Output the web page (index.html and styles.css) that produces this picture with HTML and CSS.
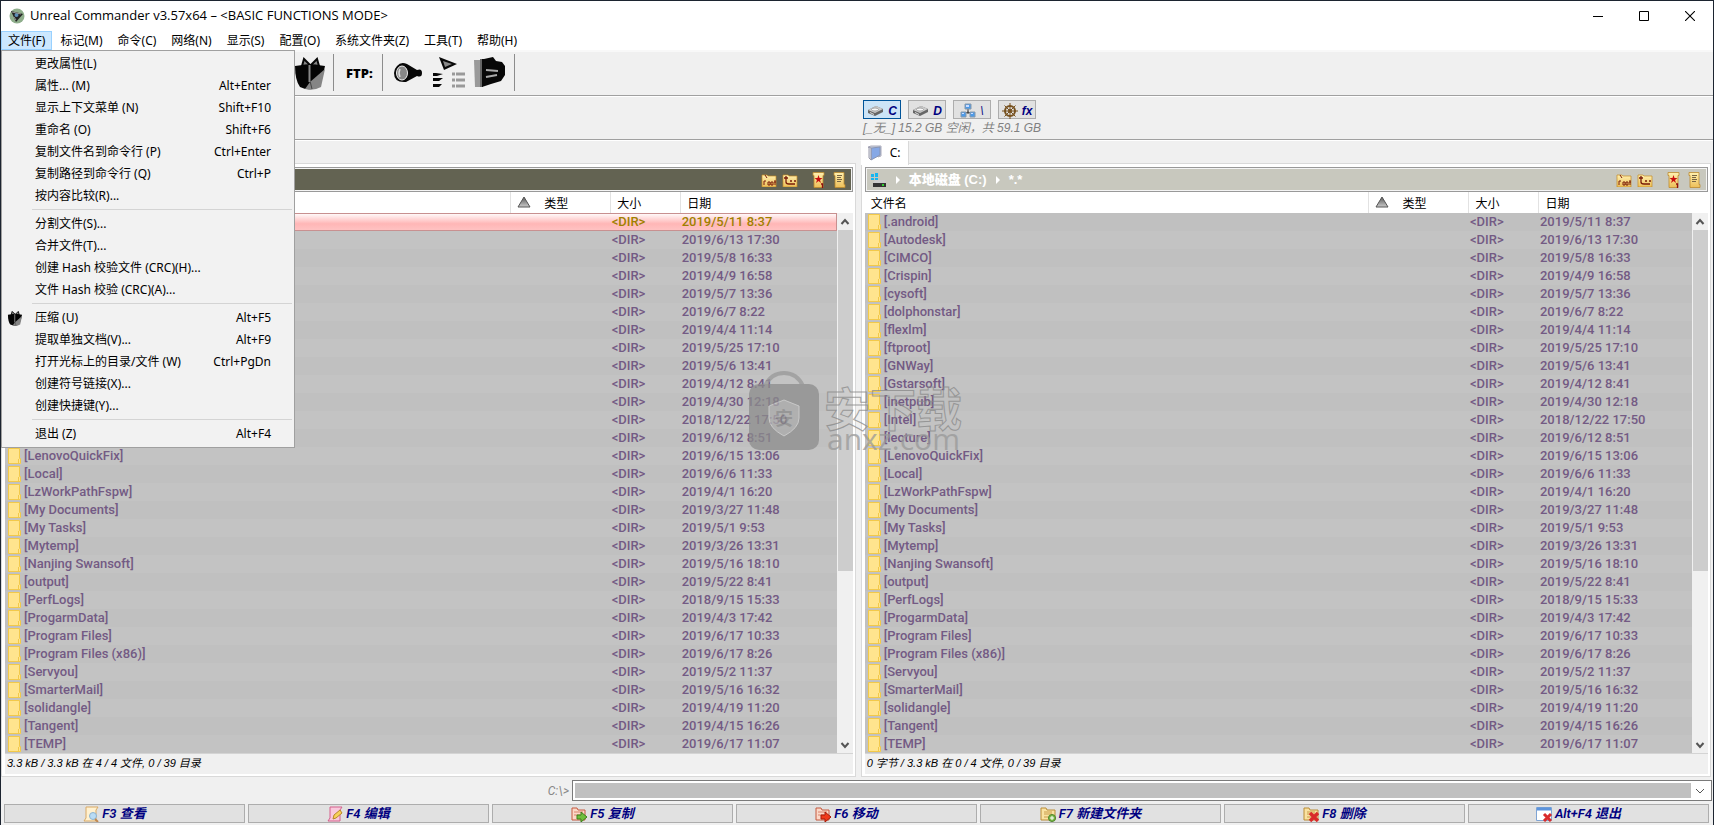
FILE: index.html
```html
<!DOCTYPE html>
<html lang="zh-CN">
<head>
<meta charset="utf-8">
<title>Unreal Commander v3.57x64</title>
<link rel="stylesheet" href="styles.css">
</head>
<body>
<svg class="defs" aria-hidden="true">
  <defs>
    <linearGradient id="tri" x1="0" y1="0" x2="0" y2="1"><stop offset="0" stop-color="#555"/><stop offset="1" stop-color="#ccc"/></linearGradient>
    <linearGradient id="gold" x1="0" y1="0" x2="0" y2="1"><stop offset="0" stop-color="#fff0b0"/><stop offset="1" stop-color="#edbf58"/></linearGradient>
    <symbol id="i-folder" viewBox="0 0 13 16"><path d="M1 1h11v10h1v5H1z" fill="#ffe48e"/><path d="M.5.5h11v10h1v5H.5z" fill="none" stroke="#f2c94a"/><path d="M10.500 11v4" stroke="#f2c94a"/></symbol>
    <symbol id="i-gift" viewBox="0 0 30 34"><path d="M7 10 9 3l6 6zM16 9l6-6 2 7z" fill="#888" stroke="#080808" stroke-width="2"/><path d="M0 10q15-3 30 0l-3 13-6 9q-8 3-16-1Q0 24 0 10z" fill="#050505"/><path d="M30 13l-4 18q-7 4-16 2l5-7z" fill="#858585"/><path d="M15 25l2 8" stroke="#444"/><path d="M14.500 9v17" stroke="#888" stroke-width="2"/></symbol>
    <symbol id="i-hdd" viewBox="0 0 17 12"><path d="M1 5 9 1l7 3v3l-8 4-7-3z" fill="#666"/><path d="M1 5 9 1l7 3-8 4z" fill="#ccc"/><ellipse cx="8" cy="4.500" rx="3.500" ry="1.500" fill="#f8f8f8" stroke="#888" stroke-width=".7"/><path d="M3 7.500l4 2" stroke="#ddd"/></symbol>
    <symbol id="i-root" viewBox="0 0 16 14"><path d="M1 2h5l1 1h8v11H1z" fill="url(#gold)" stroke="#c48a24" stroke-width=".7"/><path d="M4 2l2 3M3 12V8h2M7 9h2v3H7zM10 9h2v3h-2zM14 7v5M13 9h2" fill="none" stroke="#7a1c08"/></symbol>
    <symbol id="i-up" viewBox="0 0 16 14"><path d="M1 2h5l1 1h8v11H1z" fill="url(#gold)" stroke="#c48a24" stroke-width=".7"/><path d="M2 5h4M4 3v6q0 2 3 2h6M8 8h2M12 8h2" fill="none" stroke="#7a1c08" stroke-width="1.300"/></symbol>
    <symbol id="i-star" viewBox="0 0 12 16"><path d="M0 .5h11v3h-1v12H1v-12H0z" fill="url(#gold)" stroke="#bd8a2f" stroke-width=".8"/><path d="M5.500 3l1 3h3L7 8l1 3-2.500-2L3 11l1-3-2.500-2h3z" fill="#c80d0d"/><path d="M8 12h1.500v4" fill="none" stroke="#901010" stroke-width="1.300"/></symbol>
    <symbol id="i-scroll" viewBox="0 0 12 16"><path d="M0 .5h10v12h1v3H1v-12H0z" fill="url(#gold)" stroke="#bd8a2f" stroke-width=".8"/><path d="M3 3.500h5M3 5.500h4M3 7.500h5M3 9.500h4" stroke="#776443"/></symbol>
    <symbol id="i-sort" viewBox="0 0 14 12"><path d="M7 1 13 11H1z" fill="url(#tri)" stroke="#555"/></symbol>
    <symbol id="i-up-arrow" viewBox="0 0 10 8"><path d="M1.500 6 5 2l3.500 4" fill="none" stroke="#555" stroke-width="2"/></symbol>
    <symbol id="i-down-arrow" viewBox="0 0 10 8"><path d="M1.500 2 5 6l3.500-4" fill="none" stroke="#555" stroke-width="2"/></symbol>
    <symbol id="i-dir" viewBox="0 0 16 16"><path d="M1 2h5l1 2h8v10H1z" fill="#f9e2a2" stroke="#b98c37"/><path d="M4 6h8M4 8h8M4 11h6" stroke="#c99c4a"/></symbol>
    <symbol id="i-dir-red" viewBox="0 0 16 16"><path d="M1 2h5l1 2h7v10H1z" fill="#fbd8c8" stroke="#c4593e"/><path d="M3 6h9M3 9h6" stroke="#d9826c"/></symbol>
  </defs>
</svg>
<div class="window">
  <header class="titlebar">
    <svg class="logo" viewBox="0 0 16 16"><circle cx="8" cy="8" r="7.500" fill="#8fae8c"/><path d="M2 3l12 3-7 8z" fill="#222"/><circle cx="7.500" cy="7" r="2" fill="#5d8fb8"/><path d="M3 4l9 2M5 9l2 3" stroke="#999"/></svg>
    <h1>Unreal Commander v3.57x64 – &lt;BASIC FUNCTIONS MODE&gt;</h1>
    <div class="winbuttons">
      <button aria-label="Minimize"><svg viewBox="0 0 10 10"><path d="M0 5.500h10" stroke="#000"/></svg></button>
      <button aria-label="Maximize"><svg viewBox="0 0 10 10"><path d="M.5.5h9v9h-9z" fill="none" stroke="#000"/></svg></button>
      <button aria-label="Close"><svg viewBox="0 0 10 10"><path d="M0 0l10 10M10 0 0 10" stroke="#000" stroke-width="1.100"/></svg></button>
    </div>
  </header>
  <nav class="menubar">
    <div class="menu">
      <button class="open">文件(F)</button>
      <div class="dropdown" id="filemenu"></div>
    </div>
    <button>标记(M)</button><button>命令(C)</button><button>网络(N)</button><button>显示(S)</button><button>配置(O)</button><button>系统文件夹(Z)</button><button>工具(T)</button><button>帮助(H)</button>
  </nav>
  <div class="toolbar">
    <button class="tool" aria-label="压缩"><svg width="30" height="34"><use href="#i-gift"/></svg></button>
    <span class="divider"></span>
    <span class="ftp">FTP:</span>
    <span class="divider"></span>
    <button class="tool search" aria-label="搜索"><svg width="30" height="34" viewBox="0 0 30 34"><path d="M3 10q4-5 10-2l10 6q5-2 5 3t-5 3L12 26Q0 27 0 17 0 13 3 10z" fill="#080808"/><ellipse cx="8" cy="17" rx="5.500" ry="7" fill="#888" stroke="#eee"/><path d="M6 13q-2 4 0 8" stroke="#ddd" fill="none" stroke-width="1.500"/></svg></button>
    <button class="tool" aria-label="批量重命名"><svg width="34" height="34" viewBox="0 0 34 34"><path d="M7 1l18 7-13 6z" fill="#080808"/><path d="M11 5l9 3-7 3z" fill="#888"/><path d="M1 17h3l7 1-6 2H1zM1 22h10l-4 3H1zM1 28h9l-3 3H1z" fill="#080808"/><path d="M20 18h3m1 0h9M20 24h3m1 0h9M20 30h3m1 0h9" stroke="#999" stroke-width="3"/></svg></button>
    <button class="tool" aria-label="同步目录"><svg width="32" height="34" viewBox="0 0 32 34"><path d="M0 4h6v27H1z" fill="#999"/><path d="M6 3h3v28H6z" fill="#666"/><path d="M8 3h2l9-2 3 4 6 1 3 4v9l-4 6-10 3-9 3H8z" fill="#080808"/><path d="M12 14l12 1M12 21l11-2" stroke="#aaa" stroke-width="2"/></svg></button>
    <span class="divider"></span>
  </div>
  <div class="drives">
    <div class="drivebuttons">
      <button class="drive active"><svg width="17" height="12"><use href="#i-hdd"/></svg><b>C</b></button>
      <button class="drive"><svg width="17" height="12"><use href="#i-hdd"/></svg><b>D</b></button>
      <button class="drive"><svg width="16" height="16" viewBox="0 0 16 16"><path d="M8 6v5M4 11l4-2 4 2" stroke="#333" fill="none"/><path d="M5 1h6v5H5zM1 9h5v5H1zM10 9h5v5h-5z" fill="#4e9be8" stroke="#89a"/><path d="M6 2h3v2H6zM2 10h2v1H2zM11 10h2v1h-2z" fill="#cdf"/></svg><span>\</span></button>
      <button class="drive"><svg width="16" height="16" viewBox="0 0 16 16"><g fill="none" stroke="#76511f"><circle cx="8" cy="8" r="5" stroke-width="2"/><circle cx="8" cy="8" r="1.500"/><path d="M8 0v16M0 8h16M2.500 2.500l11 11M13.500 2.500l-11 11"/></g></svg><b>fx</b></button>
    </div>
    <div class="space">[_无_] 15.2 GB 空闲，共 59.1 GB</div>
  </div>
  <main class="panels">
    <section class="panel">
      <div class="tabs"></div>
      <div class="frame">
        <div class="path dark"><span class="crumbs"></span><span class="pathicons"><svg width="16" height="14"><use href="#i-root"/></svg><svg width="16" height="14"><use href="#i-up"/></svg><svg class="apart" width="16" height="16"><use href="#i-star"/></svg><svg width="16" height="16"><use href="#i-scroll"/></svg></span></div>
        <div class="list"><table id="left"></table>
          <div class="scroll"><button aria-label="向上"><svg width="10" height="8"><use href="#i-up-arrow"/></svg></button><div class="thumb"></div><button aria-label="向下"><svg width="10" height="8"><use href="#i-down-arrow"/></svg></button></div></div>
        <div class="status">3.3 kB / 3.3 kB 在 4 / 4 文件, 0 / 39 目录</div>
      </div>
    </section>
    <section class="panel">
      <div class="tabs"><button class="tab"><svg width="16" height="16" viewBox="0 0 16 16"><path d="M1 2l3-1 10 0v10l-3 1z" fill="#cbd2dc" stroke="#aab"/><path d="M5 3l8-1v8L4 15V3z" fill="#86a8e6" stroke="#8794b4"/><path d="M2 2l2 1v12l-2-2z" fill="#e4e8ee" stroke="#99a"/></svg>C:</button></div>
      <div class="frame">
        <div class="path light"><span class="crumbs"><svg width="16" height="14" viewBox="0 0 16 14"><path d="M0 1h3v3H0zM4 0h3v4H4zM0 5h3v2H0zM4 5h3v3H4z" fill="#18b5f0"/><path d="M4 7h10l1 3H2z" fill="#ccc"/><path d="M2 10h13v4H2z" fill="#333"/><path d="M11 12h2" stroke="#3f3" stroke-width="1.500"/></svg><i></i><b>本地磁盘 (C:)</b><i></i><b>*.*</b></span><span class="pathicons"><svg width="16" height="14"><use href="#i-root"/></svg><svg width="16" height="14"><use href="#i-up"/></svg><svg class="apart" width="16" height="16"><use href="#i-star"/></svg><svg width="16" height="16"><use href="#i-scroll"/></svg></span></div>
        <div class="list"><table id="right"></table>
          <div class="scroll"><button aria-label="向上"><svg width="10" height="8"><use href="#i-up-arrow"/></svg></button><div class="thumb"></div><button aria-label="向下"><svg width="10" height="8"><use href="#i-down-arrow"/></svg></button></div></div>
        <div class="status">0 字节 / 3.3 kB 在 0 / 4 文件, 0 / 39 目录</div>
      </div>
    </section>
  </main>
  <div class="command">
    <label for="cmd">C:\&gt;</label>
    <div class="combo"><input id="cmd" type="text"><button aria-label="历史"><svg width="10" height="8" viewBox="0 0 10 8"><path d="M1 2l4 4 4-4" fill="none" stroke="#555"/></svg></button></div>
  </div>
  <footer class="keys">
    <button><svg width="16" height="16" viewBox="0 0 16 16"><path d="M3 1h12l-2 3v11H1l2-3z" fill="#fff1d0" stroke="#d9a964"/><circle cx="10" cy="10" r="3.500" fill="#b9dcf5" stroke="#8eb4d0"/><path d="M12 13l3 3" stroke="#c08850" stroke-width="2"/></svg>F3 查看</button>
    <button><svg width="16" height="16" viewBox="0 0 16 16"><path d="M3 1h12l-2 3v11H1l2-3z" fill="#f9c9dc" stroke="#d4608c"/><path d="M6 13l1-4 6-5 2 3-6 5z" fill="#f7d257" stroke="#b98628"/></svg>F4 编辑</button>
    <button><svg width="16" height="16" viewBox="0 0 16 16"><use href="#i-dir-red"/><path d="M6 9h4V6l6 5-6 5v-3H6z" fill="#6fbe3c" stroke="#3d7f1b"/></svg>F5 复制</button>
    <button><svg width="16" height="16" viewBox="0 0 16 16"><use href="#i-dir-red"/><path d="M6 9h4V6l6 5-6 5v-3H6z" fill="#f03a1a" stroke="#a71b08"/></svg>F6 移动</button>
    <button><svg width="16" height="16" viewBox="0 0 16 16"><use href="#i-dir"/><circle cx="12" cy="12" r="3.500" fill="#7dba4c" stroke="#4b8427"/><path d="M10 12h4M12 10v4" stroke="#fff"/></svg>F7 新建文件夹</button>
    <button><svg width="16" height="16" viewBox="0 0 16 16"><use href="#i-dir"/><path d="M7 7l8 8M15 7l-8 8" stroke="#d92b2b" stroke-width="3.500"/></svg>F8 删除</button>
    <button><svg width="16" height="16" viewBox="0 0 16 16"><path d="M.5 1.500h15v13H.5z" fill="#fff" stroke="#7fa4d4"/><path d="M1 3h14" stroke="#5d94dc" stroke-width="3"/><path d="M8 8l7 7M15 8l-7 7" stroke="#d92b2b" stroke-width="3"/></svg>Alt+F4 退出</button>
  </footer>
  <div class="watermark" aria-hidden="true">
    <svg width="70" height="80" viewBox="0 0 70 80"><path d="M16 15Q22 2 35 2t19 13" fill="none" stroke="#999" stroke-width="4"/><rect y="13" width="70" height="66" rx="10" fill="#8c8c8c"/><path d="M20 35l15-6 15 6v12q0 10-15 18-15-8-15-18z" fill="#aaa" stroke="#ccc"/><text x="35" y="54" text-anchor="middle" class="seal">安</text></svg>
    <div class="wm-text"><span class="wm-big">安下载</span><span class="wm-small">anxz.com</span></div>
  </div>
</div>
<script src="app.js"></script>
</body>
</html>
```

FILE: styles.css
```css
* { box-sizing: border-box; }
body {
  margin: 0;
  font: 12px/16px "Noto Sans", "Noto Sans CJK SC", sans-serif;
  color: #000;
  background: #f0f0f0;
}
button { font: inherit; color: inherit; border: 0; padding: 0; background: none; }
svg { flex: none; }
.defs { position: absolute; width: 0; height: 0; }
.window {
  position: relative;
  display: flex;
  flex-direction: column;
  min-height: 100vh;
  border: 1px solid #1c2430;
}
.titlebar { display: flex; align-items: center; height: 30px; background: #fff; padding-left: 8px; }
.logo { width: 16px; height: 16px; }
.titlebar h1 { margin: 0 auto 2px 5px; font: 400 13px/16px "Open Sans", sans-serif; }
.winbuttons { display: flex; }
.winbuttons button { display: grid; place-items: center; width: 46px; height: 30px; }
.winbuttons svg { width: 10px; height: 10px; }

.menubar { display: flex; gap: 1px; height: 19px; background: #fff; }
.menubar button { height: 19px; padding: 0 7px; white-space: nowrap; }
.menu { position: relative; }
.menubar .open { background: #cce8ff; outline: 1px solid #99d1ff; outline-offset: -1px; }
.dropdown {
  position: absolute;
  z-index: 5;
  left: 0;
  top: 19px;
  width: 294px;
  padding: 2px;
  background: #f2f2f2;
  border: 1px solid #a0a0a0;
}
.menubar .dropdown button { display: flex; align-items: center; width: 100%; height: 22px; padding: 0 21px 0 0; }
.dropdown .ico { display: flex; width: 31px; padding-left: 3px; }
.dropdown kbd { margin-left: auto; font: inherit; }
.dropdown hr { height: 1px; margin: 2px 0 3px 28px; border: 0; background: #d4d4d4; }

.toolbar {
  display: flex;
  align-items: center;
  gap: 8px;
  height: 46px;
  padding: 0 0 2px 294px;
  border-top: 2px solid #f8f8f8;
  border-bottom: 1px solid #a0a0a0;
}
.tool { display: flex; }
.divider { width: 1px; height: 37px; background: #8c8c8c; }
.ftp { width: 32px; margin-left: 4px; margin-right: -4px; font: 800 13px/16px "Open Sans", sans-serif; }
.search { margin-left: 3px; }

.drives {
  height: 44px;
  padding: 3px 0 0 calc(50% + 6px);
  border-top: 1px solid #fff;
  border-bottom: 1px solid #a0a0a0;
}
.drivebuttons { display: flex; gap: 7px; }
.drive {
  display: flex;
  align-items: center;
  justify-content: center;
  gap: 4px;
  width: 38px;
  height: 19px;
  padding-top: 2px;
  background: #e1e1e1;
  border: 1px solid #adadad;
  color: navy;
  font: italic 12px/16px "Liberation Sans", sans-serif;
}
.drive.active { background: #cce4f7; border-color: #005499; }
.space { font: italic 12px/18px "Liberation Sans", "Noto Sans CJK SC", sans-serif; color: #808080; }

.panels { display: grid; grid-template-columns: 1.005fr 1fr; gap: 5px; padding-right: 2px; border-top: 1px solid #fff; }
.panel { min-width: 0; }
.tabs { display: flex; height: 22px; }
.tab { display: flex; align-items: center; gap: 7px; width: 48px; height: 24px; padding-left: 6px; background: #fff; border-right: 1px solid #d9d9d9; z-index: 1; }
.frame { padding: 3px 2px 2px 3px; background: #fff; border: 1px solid #d9d9d9; }
.path { display: flex; align-items: center; justify-content: space-between; height: 25px; padding: 0 4px 0 5px; border: 1px solid #999; box-shadow: inset 0 0 0 1px #f4f4f4; color: #fff; }
.dark { background: #636352; }
.light { background: #c8c8be; }
.crumbs { display: flex; align-items: center; gap: 9px; font: bold 13px/16px "Liberation Sans", "Noto Sans CJK SC", sans-serif; }
.crumbs i { border: 4px solid transparent; border-left-color: #fff; border-right: 0; }
.pathicons { display: flex; align-items: center; gap: 5px; }
.apart { margin-left: 8px; }

.list { display: flex; }
table { flex: 1; table-layout: fixed; border-collapse: collapse; width: 0; }
th { height: 21px; padding: 3px 0 0 6px; text-align: left; font-weight: 400; line-height: 16px; background: #fff; }
th + th { border-left: 1px solid #e2e2e2; }
th svg { margin-right: 13px; }
.c-type { width: 100px; }
.c-size { width: 70px; }
.c-date { width: 156px; }
#right .c-date { width: 153px; }
td { height: 18px; padding: 0 0 0 1px; font: 500 13px/16px Roboto, sans-serif; color: #735a84; white-space: nowrap; overflow: hidden; }
.name { display: flex; align-items: center; gap: 3px; padding-left: 2px; }
tbody tr { background: #c3c3c3; }
tbody tr:nth-child(odd) { background: #c0c0c0; }
tbody tr.selected { background: linear-gradient(#fff, #ffb6b6 60%, #ffc4c4); box-shadow: inset 0 0 0 1px #c89090; }
.selected td { color: #a08000; }
.scroll { display: flex; flex-direction: column; align-items: stretch; width: 16px; margin-top: 21px; padding-left: 1px; background: #f0f0f0; }
.scroll button { display: grid; place-items: center; height: 17px; }
.thumb { height: 341px; margin-bottom: auto; background: #cdcdcd; }
.status { height: 21px; padding-left: 2px; border-top: 1px solid #d4d4d4; background: #f0f0f0; font: italic 11px/19px "Liberation Sans", "Noto Sans CJK SC", sans-serif; }

.command { display: flex; align-items: center; gap: 3px; height: 21px; margin: 3px 1px 3px 0; }
.command label { flex: 0 0 33.2%; text-align: right; color: #888; font: italic 12px/16px Roboto, sans-serif; }
.combo { display: flex; flex: 1; height: 21px; padding: 2px; background: #fff; border: 1px solid #7a7a7a; }
.combo input { flex: 1; min-width: 0; padding: 0 4px; border: 0; background: silver; font: inherit; }
.combo button { display: grid; place-items: center; width: 18px; }

.keys { display: grid; grid-template-columns: repeat(7, 1fr); gap: 3px; padding: 0 4px 2px 3px; }
.keys button { display: flex; align-items: center; justify-content: center; gap: 3px; height: 19px; padding-right: 20px; background: #e1e1e1; border: 1px solid #adadad; color: navy; font: italic 600 13px/16px Roboto, "Noto Sans CJK SC", sans-serif; }

.watermark { position: absolute; z-index: 4; left: 748px; top: 370px; display: flex; gap: 5px; opacity: .75; pointer-events: none; }
.wm-text { display: flex; flex-direction: column; padding-top: 12px; }
.wm-big { font: bold 46px/46px "Noto Sans CJK SC", sans-serif; color: transparent; -webkit-text-stroke: 1px #888; }
.wm-small { padding-left: 3px; font: 30px/20px "Open Sans", sans-serif; color: #999; }
.seal { font: bold 18px "Noto Sans CJK SC", sans-serif; fill: #888; }
```

FILE: app.js
```js
const menu = [
  ["更改属性(L)"], ["属性... (M)", "Alt+Enter"], ["显示上下文菜单 (N)", "Shift+F10"], ["重命名 (O)", "Shift+F6"],
  ["复制文件名到命令行 (P)", "Ctrl+Enter"], ["复制路径到命令行 (Q)", "Ctrl+P"], ["按内容比较(R)..."], null,
  ["分割文件(S)..."], ["合并文件(T)..."], ["创建 Hash 校验文件 (CRC)(H)..."], ["文件 Hash 校验 (CRC)(A)..."], null,
  ["压缩 (U)", "Alt+F5", true], ["提取单独文档(V)...", "Alt+F9"], ["打开光标上的目录/文件 (W)", "Ctrl+PgDn"],
  ["创建符号链接(X)..."], ["创建快捷键(Y)..."], null, ["退出 (Z)", "Alt+F4"]
];
document.getElementById("filemenu").innerHTML = menu.map(m => m
  ? `<button><span class="ico">${m[2] ? '<svg width="16" height="16"><use href="#i-gift"/></svg>' : ""}</span>${m[0]}<kbd>${m[1] || ""}</kbd></button>`
  : "<hr>").join("");

const rows = [
  [".android", "2019/5/11 8:37"], ["Autodesk", "2019/6/13 17:30"], ["CIMCO", "2019/5/8 16:33"], ["Crispin", "2019/4/9 16:58"],
  ["cysoft", "2019/5/7 13:36"], ["dolphonstar", "2019/6/7 8:22"], ["flexlm", "2019/4/4 11:14"], ["ftproot", "2019/5/25 17:10"],
  ["GNWay", "2019/5/6 13:41"], ["Gstarsoft", "2019/4/12 8:41"], ["inetpub", "2019/4/30 12:18"], ["Intel", "2018/12/22 17:50"],
  ["lecture", "2019/6/12 8:51"], ["LenovoQuickFix", "2019/6/15 13:06"], ["Local", "2019/6/6 11:33"], ["LzWorkPathFspw", "2019/4/1 16:20"],
  ["My Documents", "2019/3/27 11:48"], ["My Tasks", "2019/5/1 9:53"], ["Mytemp", "2019/3/26 13:31"], ["Nanjing Swansoft", "2019/5/16 18:10"],
  ["output", "2019/5/22 8:41"], ["PerfLogs", "2018/9/15 15:33"], ["ProgarmData", "2019/4/3 17:42"], ["Program Files", "2019/6/17 10:33"],
  ["Program Files (x86)", "2019/6/17 8:26"], ["Servyou", "2019/5/2 11:37"], ["SmarterMail", "2019/5/16 16:32"], ["solidangle", "2019/4/19 11:20"],
  ["Tangent", "2019/4/15 16:26"], ["TEMP", "2019/6/17 11:07"]
];
function fill(id, selected) {
  document.getElementById(id).innerHTML =
    '<thead><tr><th>文件名</th><th class="c-type"><svg width="14" height="12"><use href="#i-sort"/></svg>类型</th><th class="c-size">大小</th><th class="c-date">日期</th></tr></thead><tbody>' +
    rows.map((r, i) => `<tr${i === selected ? ' class="selected"' : ""}><td><span class="name"><svg width="13" height="16"><use href="#i-folder"/></svg>[${r[0]}]</span></td><td></td><td>&lt;DIR&gt;</td><td>${r[1]}</td></tr>`).join("") +
    "</tbody>";
}
fill("left", 0);
fill("right", -1);
```
